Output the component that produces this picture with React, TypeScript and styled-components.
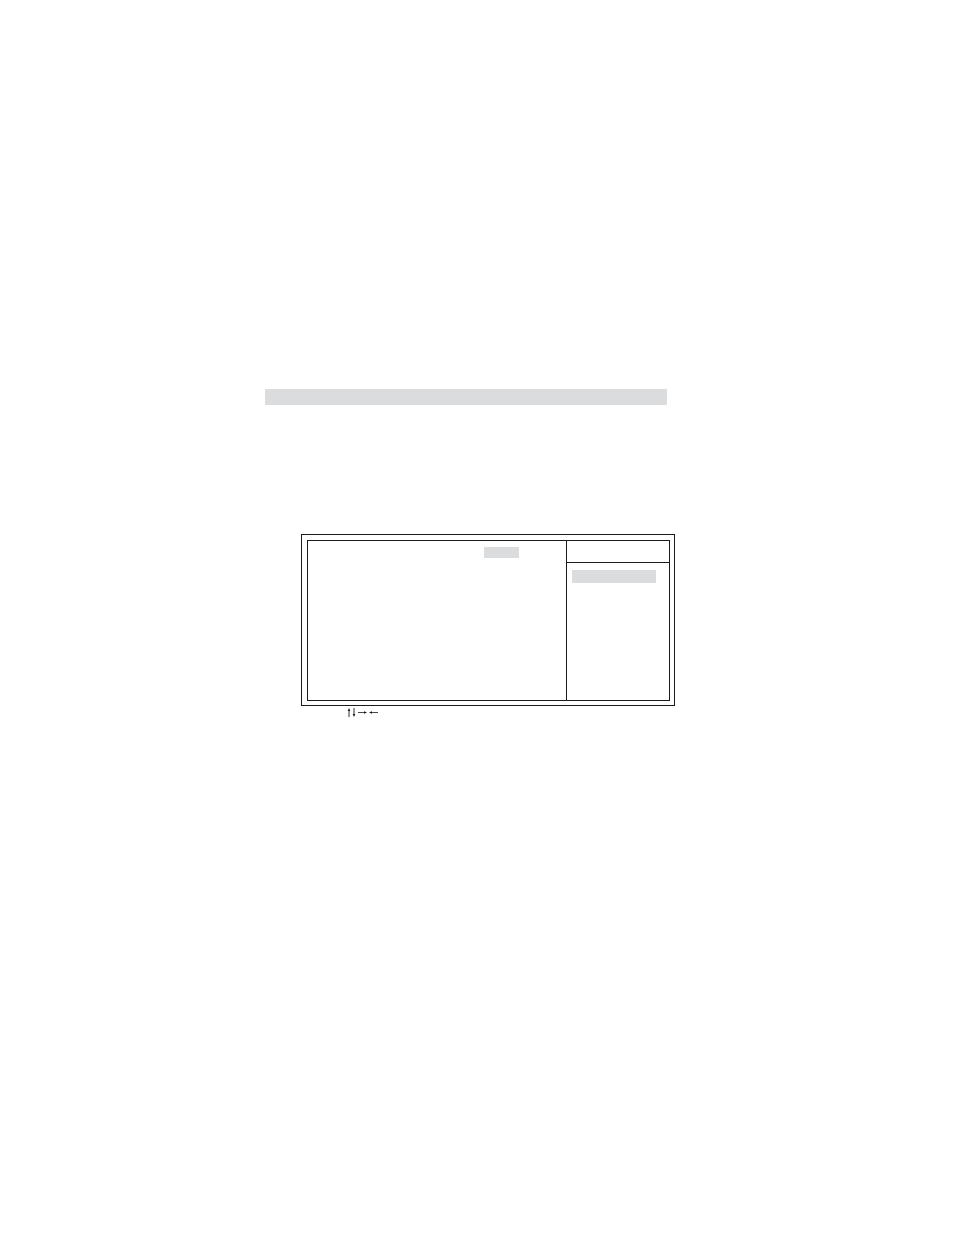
import React from "react";
import styled, { createGlobalStyle } from "styled-components";

const GlobalStyle = createGlobalStyle`
  * { box-sizing: border-box; }
  body {
    margin: 0;
    background: #ffffff;
    color: #1c1a1b;
    font-family: "Liberation Sans", Arial, sans-serif;
  }
`;

const Page = styled.main`
  min-height: 100vh;
  padding: 389px 279px 0 265px;
`;

const TitleBar = styled.header`
  height: 16px;
  margin-right: 8px;
  background: #dbdcde;
`;

const Setup = styled.section`
  margin: 129px 0 0 36px;
`;

const Frame = styled.div`
  padding: 5px 4px 4px 5px;
  border: 1px solid #1c1a1b;
`;

const Panes = styled.div`
  display: grid;
  grid-template-columns: 1fr 103px;
  min-height: 161px;
  border: 1px solid #1c1a1b;
`;

const OptionsPane = styled.div`
  display: flex;
  justify-content: flex-end;
  align-items: flex-start;
  padding: 6px 47px;
`;

const HelpPane = styled.aside`
  border-left: 1px solid #1c1a1b;
`;

const HelpHeader = styled.div`
  height: 22px;
  border-bottom: 1px solid #1c1a1b;
`;

const HelpBody = styled.div`
  padding: 7px 13px 7px 5px;
`;

const Highlight = styled.div<{ $width: string; $height: number }>`
  width: ${(p) => p.$width};
  height: ${(p) => p.$height}px;
  background: #dbdcde;
`;

const KeyLegend = styled.footer`
  display: flex;
  padding: 2px 0 0 46px;
`;

const Arrows = styled.svg`
  display: block;
  width: 32px;
  height: 10px;
`;

export default function App() {
  return (
    <>
      <GlobalStyle />
      <Page>
        <TitleBar />
        <Setup>
          <Frame>
            <Panes>
              <OptionsPane>
                <Highlight $width="35px" $height={11} />
              </OptionsPane>
              <HelpPane>
                <HelpHeader />
                <HelpBody>
                  <Highlight $width="100%" $height={13} />
                </HelpBody>
              </HelpPane>
            </Panes>
          </Frame>
          <KeyLegend>
            <Arrows viewBox="0 0 32 10" role="img" aria-label="Arrow keys">
              <g stroke="#1c1a1b" fill="none">
                <path d="M2 2V9M7 0V7" strokeWidth="0.9" />
                <path d="M11 4.5H19M24 4.5H31" strokeWidth="0.8" />
              </g>
              <g fill="#1c1a1b">
                <path d="M2 0L3.3 3H0.7Z" />
                <path d="M7 9L5.7 6H8.3Z" />
                <path d="M20 4.5L17 3.2V5.8Z" />
                <path d="M22 4.5L25 3.2V5.8Z" />
              </g>
            </Arrows>
          </KeyLegend>
        </Setup>
      </Page>
    </>
  );
}
